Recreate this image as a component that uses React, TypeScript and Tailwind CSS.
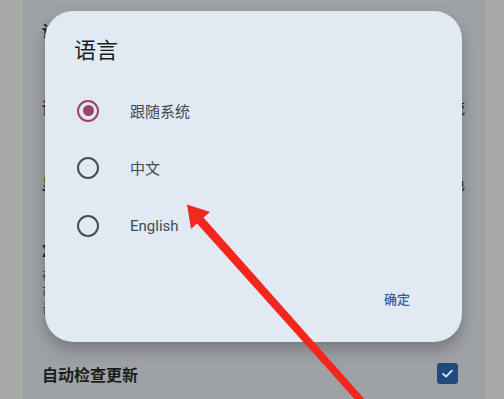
const cjk = { fontFamily: '"Noto Sans CJK SC", "Noto Sans", sans-serif' };
const latin = { fontFamily: 'Roboto, "Noto Sans CJK SC", sans-serif' };

function Radio({ checked }: { checked?: boolean }) {
  return checked ? (
    <span className="flex h-[22px] w-[22px] items-center justify-center rounded-full border-[2.5px] border-[#9c4468]">
      <span className="h-[11px] w-[11px] rounded-full bg-[#9c4468]" />
    </span>
  ) : (
    <span className="h-[22px] w-[22px] rounded-full border-2 border-[#4a4d52]" />
  );
}

export default function App() {
  const options = [
    { label: "跟随系统", checked: true },
    { label: "中文" },
    { label: "English" },
  ];

  return (
    <div className="relative h-[399px] w-[504px] overflow-hidden bg-[#a8a9a9]" style={cjk}>
      <div className="relative ml-[22px] h-full w-[463px] bg-[#9fa2a5] text-[#1b1c1e]">
        {/* page behind the dialog */}
        <div className="flex flex-col px-[20px]">
          <div className="flex h-[60px] items-center text-[16px] font-bold">设置</div>
          <div className="flex h-[94px] items-center justify-between text-[16px] font-bold">
            <span>语言</span>
            <span className="text-[14px] font-normal">跟随系统</span>
          </div>
          <div className="flex h-[58px] items-center justify-between text-[16px] font-bold">
            <span>显示模式</span>
            <span className="text-[14px] font-normal">亮色</span>
          </div>
          <div className="flex h-[128px] flex-col pt-[28px]">
            <span className="text-[16px] font-bold leading-[20px]">X 默认</span>
            <span className="mt-[6px] text-[12px] leading-[17px] text-[#3e4044]">
              在某些设备上
              <br />
              可能需要
              <br />
              设置后重启
            </span>
          </div>
          <div className="flex h-[59px] items-center justify-between pt-[8px]">
            <span className="text-[16px] font-bold">自动检查更新</span>
            <span className="mr-[7px] flex h-[21px] w-[21px] items-center justify-center rounded-[3px] bg-[#1f4a80]">
              <svg width="15" height="15" viewBox="0 0 24 24" fill="none" stroke="#dfe6ee" strokeWidth="3" strokeLinecap="round" strokeLinejoin="round">
                <path d="M5 12.5l4.5 4.5L19 7.5" />
              </svg>
            </span>
          </div>
        </div>

        {/* dialog */}
        <div className="absolute left-[23px] top-[11px] flex h-[331px] w-[417px] flex-col rounded-[28px] bg-[#e1eaf3] shadow-[0_8px_16px_rgba(0,0,0,0.25)]">
          <div className="pl-[29px] pt-[23px] text-[22px] leading-[28px] text-[#1a1c1e]">语言</div>
          <div className="mt-[20px] flex flex-col">
            {options.map((o) => (
              <div key={o.label} className="flex h-[57.5px] items-center pl-[32px]">
                <Radio checked={o.checked} />
                <span
                  className="ml-[31px] text-[15px] text-[#45484d]"
                  style={o.label === "English" ? latin : undefined}
                >
                  {o.label}
                </span>
              </div>
            ))}
          </div>
          <div className="mt-auto flex justify-end pb-[34px] pr-[52px]">
            <span className="text-[13px] font-medium text-[#2f5d99]">确定</span>
          </div>
        </div>
      </div>

      {/* red annotation arrow */}
      <svg className="absolute left-0 top-0" width="504" height="399" viewBox="0 0 504 399">
        <polygon
          fill="#f5261d"
          points="187,204.5 210,212 203.5,217.5 373,408.7 367.4,413.3 197,223.5 191,229"
        />
      </svg>
    </div>
  );
}
